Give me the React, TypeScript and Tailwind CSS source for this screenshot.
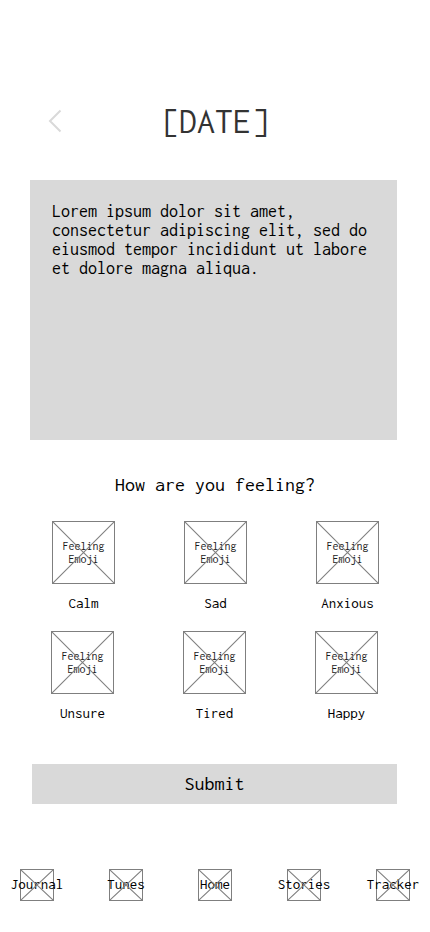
const font = "font-['Inconsolata','Noto_Sans_Mono_CJK_SC','DejaVu_Sans_Mono',monospace]";

const feelingRows = [
  { pad: "pl-[52px] pr-[51px]", names: ["Calm", "Sad", "Anxious"] },
  { pad: "pl-[51px] pr-[52px]", names: ["Unsure", "Tired", "Happy"] },
];

const pages = ["Journal", "Tunes", "Home", "Stories", "Tracker"];

function Cross() {
  return (
    <svg
      className="absolute inset-0 h-full w-full text-[#808080]"
      viewBox="0 0 100 100"
      preserveAspectRatio="none"
      aria-hidden="true"
    >
      <path
        d="M0 0L100 100M0 100L100 0"
        stroke="currentColor"
        strokeWidth="1.1"
        vectorEffect="non-scaling-stroke"
      />
    </svg>
  );
}

function Feeling({ name }: { name: string }) {
  return (
    <button type="button" className="flex w-[63px] flex-col items-center">
      <span className="relative flex h-[63px] w-full items-center justify-center border border-[#7f7f7f]">
        <span className="text-[12px] leading-[13px] text-[#1a1a1a]">
          Feeling
          <br />
          Emoji
        </span>
        <Cross />
      </span>
      <span className="mt-[11px] text-[15px] leading-4">{name}</span>
    </button>
  );
}

export default function App() {
  return (
    <div className={`min-h-screen bg-white text-black ${font}`}>
      <header className="grid grid-cols-[1fr_auto_1fr] items-center px-12 pt-[101px]">
        <button type="button" aria-label="Back" className="w-4 text-[#d9d9d9]">
          <svg className="h-6 w-4" viewBox="0 0 16 24" fill="none" aria-hidden="true">
            <path d="M12.5 1.5L2 12L12.5 22.5" stroke="currentColor" strokeWidth="2" />
          </svg>
        </button>
        <h1 className="text-[36px] leading-10 text-[#333333]">[DATE]</h1>
      </header>

      <main>
        <div className="mt-[39px] pr-[33px] pl-[30px]">
          <textarea
            aria-label="Journal entry"
            className="block h-[260px] w-full resize-none bg-[#d9d9d9] p-[22px] text-[18px] leading-[19px] outline-none"
            defaultValue="Lorem ipsum dolor sit amet, consectetur adipiscing elit, sed do eiusmod tempor incididunt ut labore et dolore magna aliqua."
          />
        </div>

        <h2 className="mt-[33px] text-center text-[20px] leading-6">How are you feeling?</h2>

        <div className="mt-6 flex flex-col gap-5">
          {feelingRows.map((row) => (
            <div key={row.names[0]} className={`flex justify-between ${row.pad}`}>
              {row.names.map((name) => (
                <Feeling key={name} name={name} />
              ))}
            </div>
          ))}
        </div>

        <div className="mt-[43px] pr-[33px] pl-8">
          <button type="submit" className="block h-10 w-full bg-[#d9d9d9] text-[20px] leading-6">
            Submit
          </button>
        </div>
      </main>

      <nav className="mt-[65px] flex justify-between px-5">
        {pages.map((page) => (
          <a
            key={page}
            href={`#${page.toLowerCase()}`}
            className="relative flex h-8 w-[34px] items-center justify-center border border-[#7f7f7f] pb-0.5 text-[15px] leading-4 whitespace-nowrap"
          >
            <span>{page}</span>
            <Cross />
          </a>
        ))}
      </nav>
    </div>
  );
}
